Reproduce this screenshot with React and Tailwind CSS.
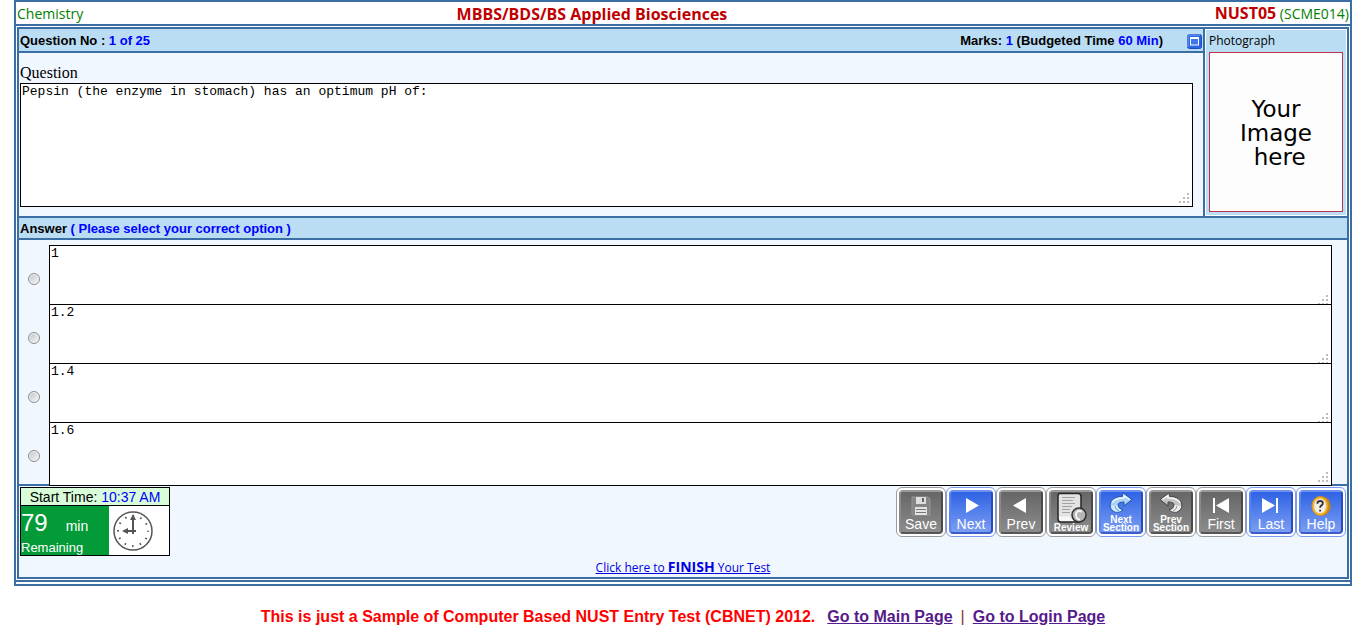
import React, { useState } from 'react';
import clsx from 'clsx';

const options = ['1', '1.2', '1.4', '1.6'];

// Small dotted grip in the corner of the text boxes
const Grip = () => (
  <svg className="pointer-events-none absolute right-1 bottom-1" width="10" height="10" viewBox="0 0 10 10" fill="#bcbcbc" shapeRendering="crispEdges">
    <path d="M8 0h2v2H8zM4 4h2v2H4zM8 4h2v2H8zM0 8h2v2H0zM4 8h2v2H4zM8 8h2v2H8z" />
  </svg>
);

const TextBox = ({ id, label, value, className }) => (
  <div className={clsx('relative', className)}>
    <textarea
      id={id}
      aria-label={label}
      readOnly
      value={value}
      className="block h-full w-full resize-none overflow-hidden border border-black bg-white px-px text-[13px] leading-[15px] text-black outline-none font-['Courier_New','Liberation_Mono',monospace]"
    />
    <Grip />
  </div>
);

const SaveIcon = () => (
  <svg width="20" height="20" viewBox="0 0 20 20">
    <path d="M1 1h16l2 2v16H1z" fill="#858585" stroke="#969696" />
    <path d="M5 1h10v7H5z" fill="#dedede" />
    <path d="M11 2h2v4h-2z" fill="#666" />
    <path d="M4 11h12v8H4z" fill="#e4e4e4" />
    <path d="M5 13.5h10M5 16.5h10" stroke="#777" />
  </svg>
);

const NextIcon = () => (
  <svg width="20" height="20" viewBox="0 0 20 20">
    <path d="M5 2l13 7.500L5 17z" fill="#fff" />
  </svg>
);

const PrevIcon = () => (
  <svg width="20" height="20" viewBox="0 0 20 20">
    <path d="M15 2L2 9.500 15 17z" fill="#fff" />
  </svg>
);

const ReviewIcon = () => (
  <svg className="shrink-0" width="32" height="32" viewBox="0 0 32 32">
    <path d="M5 1.500h18q3 0 3 3V27q0 3-3 3H6q-3 0-3-3V4q0-2.500 2-2.500z" fill="#e2e2e2" stroke="#262626" strokeWidth="1.500" />
    <path d="M7 5.500h13M7 8.500h11M7 11.500h13M7 14.500h10M7 17.500h8M7 20.500h8" stroke="#a2a2a2" />
    <path d="M4 24.500h11q2 4 6 4.500H6q-2 0-2-3z" fill="#f6f6f6" />
    <circle cx="24" cy="23" r="7" fill="#b5b5b5" stroke="#303030" strokeWidth="1.500" />
    <path d="M27 19.500q-6-2-6 3.500 0 4 4 4.500" fill="none" stroke="#f5f5f5" strokeWidth="2" />
  </svg>
);

const NextSectionIcon = () => (
  <svg className="shrink-0" width="24" height="24" viewBox="0 0 24 24">
    <path d="M14 4V1l9 6.500L15 14v-4q-6 0-6 3 0 3 5 5-4 3-8 2-5-2-5-7 1-8 13-9z" fill="#a9d2f6" stroke="#2450a8" />
    <path d="M3 11Q5 6 15 6V3.500l5.500 4" fill="none" stroke="#eef8ff" strokeWidth="1.500" />
    <path d="M2 14l6.500-1q0 4 4.500 5.500-4 2-7 1-4-2-4-5.500z" fill="#cfe8fd" />
    <path d="M6 14q0 3 4 5" fill="none" stroke="#6b9fe0" />
  </svg>
);

const PrevSectionIcon = () => (
  <svg className="shrink-0" width="24" height="24" viewBox="0 0 24 24">
    <path d="M10 4V1L1 7.500 9 14v-4q6 0 6 3 0 3-5 5 4 3 8 2 5-2 5-7-1-8-13-9z" fill="#c4c4c4" stroke="#444" />
    <path d="M21 11Q19 6 9 6V3.500l-5.500 4" fill="none" stroke="#f6f6f6" strokeWidth="1.500" />
    <path d="M22 14l-6.500-1q0 4-4.500 5.500 4 2 7 1 4-2 4-5.500z" fill="#ededed" />
    <path d="M18 14q0 3-4 5" fill="none" stroke="#9a9a9a" />
  </svg>
);

const FirstIcon = () => (
  <svg width="20" height="20" viewBox="0 0 20 20" fill="#fff">
    <path d="M2 2h2v15H2zM18 2v15L5 9.500z" />
  </svg>
);

const LastIcon = () => (
  <svg width="20" height="20" viewBox="0 0 20 20" fill="#fff">
    <path d="M1 2l13 7.500L1 17zM15 2h2v15h-2z" />
  </svg>
);

const HelpIcon = () => (
  <svg width="20" height="20" viewBox="0 0 22 22">
    <ellipse cx="12.500" cy="11" rx="9" ry="10.500" fill="#c98512" />
    <ellipse cx="10" cy="11" rx="9" ry="10.500" fill="#f2b73a" stroke="#d28c12" />
    <ellipse cx="10" cy="11" rx="6.500" ry="8" fill="#f1efe6" />
    <path d="M7 8.500q0-3 3-3T13 8q0 1.500-1.500 2.300T10 13M10 15v2" fill="none" stroke="#333" strokeWidth="2" />
  </svg>
);

const navButtons = [
  { label: 'Save', Icon: SaveIcon },
  { label: 'Next', Icon: NextIcon, active: true },
  { label: 'Prev', Icon: PrevIcon },
  { label: 'Review', Icon: ReviewIcon, small: true },
  { label: 'Next Section', Icon: NextSectionIcon, active: true, small: true },
  { label: 'Prev Section', Icon: PrevSectionIcon, small: true },
  { label: 'First', Icon: FirstIcon },
  { label: 'Last', Icon: LastIcon, active: true },
  { label: 'Help', Icon: HelpIcon, active: true },
];

const NavButton = ({ label, Icon, active, small }) => (
  <button
    type="button"
    className={clsx(
      'h-[50px] w-[50px] rounded-md border bg-white p-[2px]',
      active ? 'border-[#7d9af0]' : 'border-[#9c9c9c]'
    )}
  >
    <span
      className={clsx(
        'flex h-full w-full flex-col items-center rounded-[4px] border-2 text-white',
        active
          ? 'border-t-[#6d92f0] border-r-[#2a4cb8] border-b-[#3a5cc8] border-l-[#5c84ee] bg-linear-to-b from-[#2f62e4] to-[#7b9df2]'
          : 'border-t-[#9a9a9a] border-r-[#4a4a4a] border-b-[#565656] border-l-[#8a8a8a] bg-linear-to-b from-[#666] to-[#8c8c8c]',
        small ? 'text-[10px] leading-[8px] font-bold' : 'pt-1 text-[14px] leading-4'
      )}
    >
      <Icon />
      <span>{label}</span>
    </span>
  </button>
);

const Clock = () => (
  <svg width="40" height="40" viewBox="0 0 40 40" fill="none" stroke="#555">
    <circle cx="20" cy="20" r="19" strokeWidth="1.500" />
    <circle cx="20" cy="20" r="15" strokeWidth="2" strokeDasharray="1.500 6.354" strokeDashoffset="0.750" />
    <path d="M20 23V6M23 20H11" strokeWidth="2" />
    <path d="M20 3l3 6h-6zM9 20l6-3v6z" fill="#555" stroke="none" />
  </svg>
);

const MaximizeButton = () => (
  <button type="button" aria-label="Maximize">
    <svg className="block" width="15" height="15" viewBox="0 0 15 15">
      <rect x=".5" y=".5" width="14" height="14" rx="2" fill="#2a66e4" stroke="#184cc4" />
      <path d="M1 13V2q0-1 1-1h11" fill="none" stroke="#7faaf8" />
      <rect x="3.500" y="4" width="8" height="7" fill="#3b78ee" stroke="#fff" />
      <path d="M3 4h9" stroke="#fff" strokeWidth="2" />
    </svg>
  </button>
);

const App = () => {
  const [answer, setAnswer] = useState('');

  return (
    <div className="bg-white px-[14px] text-black font-['Arial','Liberation_Sans',sans-serif]">
      <div className="border-2 border-[#3b6ea5] pb-[2px]">
        {/* Title row */}
        <header className="grid h-[22px] grid-cols-[33%_1fr_auto] items-center px-px text-[14px] leading-[22px] text-[#008000] font-['Trebuchet_MS','Open_Sans',sans-serif]">
          <span>Chemistry</span>
          <h1 className="text-[16px] font-bold text-[#c00000]">MBBS/BDS/BS Applied Biosciences</h1>
          <span>
            <b className="text-[16px] text-[#c00000]">NUST05</b> (SCME014)
          </span>
        </header>

        <div className="border-y-2 border-[#3b6ea5] p-px">
          <main className="border-2 border-[#3b6ea5] bg-[#f0f7ff]">
            <div className="flex border-b-2 border-[#3b6ea5]">
              {/* Question */}
              <section className="flex-1">
                <div className="flex h-6 items-center border-b-2 border-[#3b6ea5] bg-[#bbddf4] px-px pt-[2px] text-[13px] font-bold">
                  <h2>
                    Question No : <span className="text-[#00f]">1 of 25</span>
                  </h2>
                  <p className="mr-6 ml-auto">
                    Marks: <span className="text-[#00f]">1</span> (Budgeted Time <span className="text-[#00f]">60 Min</span>)
                  </p>
                  <MaximizeButton />
                </div>
                <div className="pt-[10px] pr-[10px] pb-[9px] pl-px">
                  <label htmlFor="question" className="block text-[16px] leading-5 font-['Times_New_Roman','Liberation_Serif',serif]">
                    Question
                  </label>
                  <TextBox id="question" value="Pepsin (the enzyme in stomach) has an optimum pH of:" className="h-[124px]" />
                </div>
              </section>

              {/* Photograph */}
              <aside className="w-36 border-l-2 border-[#3b6ea5]">
                <div className="h-full border border-white bg-[#bbddf4] px-[3px] pb-[3px]">
                  <h2 className="text-[12px] leading-[22px] font-['Trebuchet_MS','Open_Sans',sans-serif]">Photograph</h2>
                  <div className="flex h-40 items-center justify-center border border-[#b9344c] bg-[#fdfdfd] pt-[2px] text-center text-[23px] leading-6 font-['DejaVu_Sans',sans-serif]">
                    <p>
                      Your
                      <br />
                      Image
                      <br />
                      &nbsp;here
                    </p>
                  </div>
                </div>
              </aside>
            </div>

            {/* Answers */}
            <h2 className="h-[22px] border-b-2 border-[#3b6ea5] bg-[#bbddf4] px-px pt-px text-[13px] leading-5 font-bold">
              Answer <span className="text-[#00f]">( Please select your correct option )</span>
            </h2>
            <div className="border-b-2 border-[#3b6ea5] pt-[5px] pr-[15px] pb-[3px]">
              {options.map((option, i) => (
                <div key={option} className="flex h-[59px] items-start">
                  <div className="flex h-[68px] w-[30px] items-center justify-center">
                    <input
                      type="radio"
                      name="answer"
                      aria-label={option}
                      checked={answer === option}
                      onChange={() => setAnswer(option)}
                      className="size-3 appearance-none rounded-full border border-[#8e8f8f] bg-[#d5d8db] bg-linear-to-br from-[#bfc4c9] to-[#f8f8f8] ring-1 ring-[#f4f4f4] ring-inset checked:bg-[#1c5180]"
                    />
                  </div>
                  <TextBox id={`option-${i}`} label={`Option ${i + 1}`} value={option} className="h-16 flex-1" />
                </div>
              ))}
            </div>

            {/* Timer and navigation */}
            <footer className="px-px pt-px">
              <div className="flex items-start justify-between">
                <div className="w-[150px] border border-black bg-white">
                  <div className="h-[18px] border-b border-black bg-[#d9fcd9] text-center text-[14px] leading-[18px]">
                    Start Time: <span className="text-[#00f]">10:37 AM</span>
                  </div>
                  <div className="flex h-[49px]">
                    <div className="w-[88px] bg-[#039a38] text-white">
                      <p className="flex h-[34px] items-baseline gap-[18px] text-[14px] leading-[34px]">
                        <span className="text-[24px]">79</span>
                        <span>min</span>
                      </p>
                      <p className="text-[13px] leading-[15px]">Remaining</p>
                    </div>
                    <div className="flex-1 pt-[5px] pl-1">
                      <Clock />
                    </div>
                  </div>
                </div>
                <nav className="flex">
                  {navButtons.map((button) => (
                    <NavButton key={button.label} {...button} />
                  ))}
                </nav>
              </div>
              <p className="h-[21px] pt-px text-center text-[12px] leading-5 font-['Trebuchet_MS','Open_Sans',sans-serif]">
                <a href="#finish" className="text-[#0000e0] underline">
                  Click here to <b className="text-[14px]">FINISH</b> Your Test
                </a>
              </p>
            </footer>
          </main>
        </div>
      </div>

      <p className="pt-5 text-center text-[16px] leading-[22px] font-bold text-[#f00]">
        This is just a Sample of Computer Based NUST Entry Test (CBNET) 2012.
        <a href="#main" className="ml-3 text-[#551a8b] underline">Go to Main Page</a>
        <span className="mx-2 font-normal text-[#8b3030]">|</span>
        <a href="#login" className="text-[#551a8b] underline">Go to Login Page</a>
      </p>
    </div>
  );
};

export default App;
